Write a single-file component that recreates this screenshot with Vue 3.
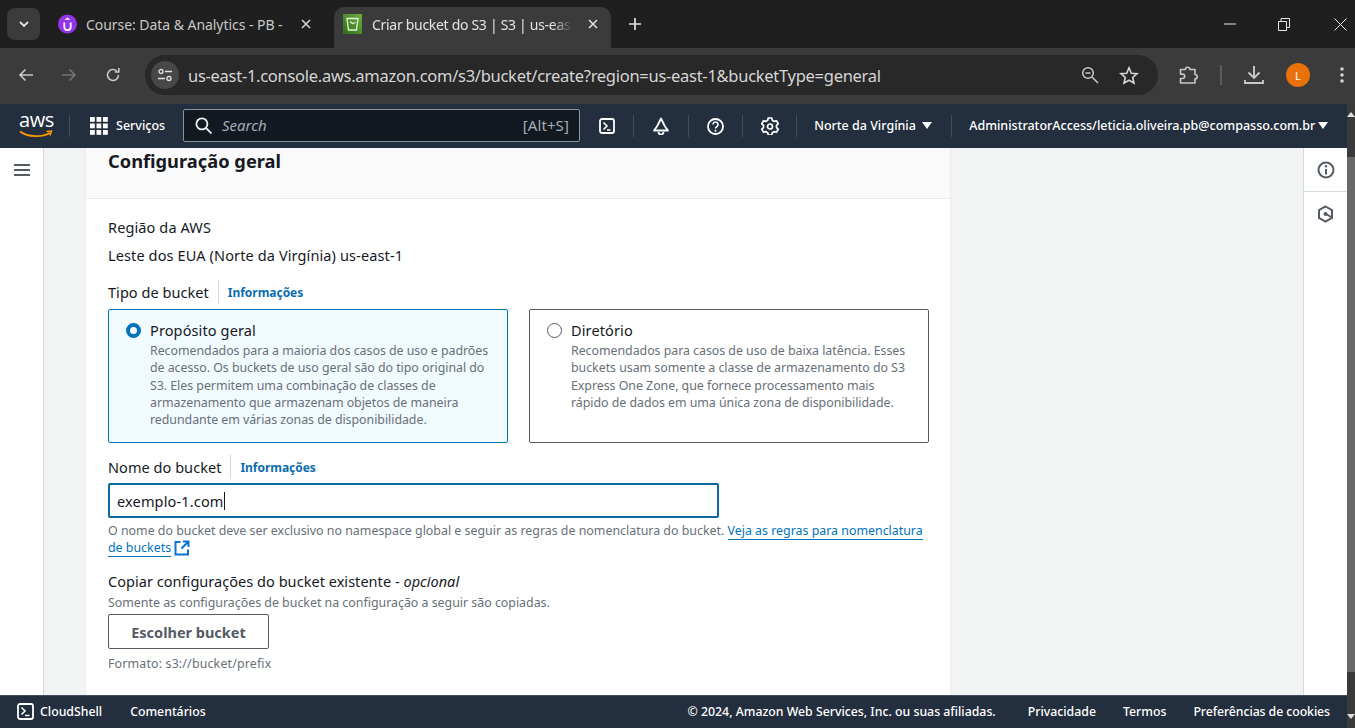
<script setup>
const bars = [0, 1, 2]
</script>

<template>
  <div class="page">
    <div class="tabstrip">
      <div class="tabmenu">
        <svg width="10" height="7" viewBox="0 0 10 7"><path d="M1 1l4 4 4-4" fill="none" stroke="#e3e3e3" stroke-width="1.8"/></svg>
      </div>
      <div class="tab">
        <svg width="19" height="20" viewBox="0 0 19 20" class="favicon"><circle cx="9.500" cy="10" r="9.500" fill="#9333ea"/><path d="M6.300 8.500v4.500a3.200 3.200 0 0 0 6.400 0V8.500" fill="none" stroke="#fff" stroke-width="1.800"/><path d="M9.500 3.500l3 2.300h-6z" fill="#fff"/></svg>
        <span class="tabtitle">Course: Data &amp; Analytics - PB -</span>
        <svg width="10" height="10" viewBox="0 0 10 10" class="tabx"><path d="M1 1l8 8M9 1l-8 8" stroke="#d5d5d5" stroke-width="1.500"/></svg>
      </div>
      <div class="tab active">
        <svg width="19" height="20" viewBox="0 0 19 20" class="favicon"><defs><linearGradient id="s3g" x1="0" y1="1" x2="1" y2="0"><stop offset="0" stop-color="#2f6e1c"/><stop offset="1" stop-color="#6cae3e"/></linearGradient></defs><rect width="19" height="20" fill="url(#s3g)"/><path d="M4 4.500h11l-1.500 11.500h-8z" fill="none" stroke="#e4f3d8" stroke-width="1.300"/><path d="M7 7.500l2.500 2 3-1" fill="none" stroke="#e4f3d8" stroke-width="1.200"/></svg>
        <span class="tabtitle fade">Criar bucket do S3 | S3 | us-east-1</span>
        <svg width="10" height="10" viewBox="0 0 10 10" class="tabx"><path d="M1 1l8 8M9 1l-8 8" stroke="#e3e3e3" stroke-width="1.500"/></svg>
      </div>
      <svg width="14" height="14" viewBox="0 0 14 14" class="newtab"><path d="M7 1v12M1 7h12" stroke="#e3e3e3" stroke-width="1.700"/></svg>
      <div class="winctl">
        <svg width="12" height="2" viewBox="0 0 12 2"><path d="M0 1h12" stroke="#e6e6e6" stroke-width="1"/></svg>
        <svg width="12" height="13" viewBox="0 0 12 13"><path d="M.5 3.500h8v9h-8zM3 3.500v-3h8.500v9h-3" fill="none" stroke="#e6e6e6" stroke-width="1"/></svg>
        <svg width="13" height="13" viewBox="0 0 13 13"><path d="M.5.500l12 12M12.500.500l-12 12" stroke="#e6e6e6" stroke-width="1"/></svg>
      </div>
    </div>

    <div class="toolbar">
      <div class="navbtns">
        <svg width="16" height="14" viewBox="0 0 16 14"><path d="M15 7H2M7.500 1.500L2 7l5.500 5.500" fill="none" stroke="#c7c7c7" stroke-width="1.600"/></svg>
        <svg width="16" height="14" viewBox="0 0 16 14"><path d="M1 7h13M8.500 1.500L14 7l-5.500 5.500" fill="none" stroke="#757575" stroke-width="1.600"/></svg>
        <svg width="16" height="16" viewBox="0 0 16 16"><path d="M13.500 8a5.500 5.500 0 1 1-1.800-4.100M13.800 1v4h-4" fill="none" stroke="#c7c7c7" stroke-width="1.600"/></svg>
      </div>
      <div class="omnibox">
        <div class="sitechip">
          <svg width="16" height="14" viewBox="0 0 16 14"><circle cx="4" cy="3.500" r="2" fill="none" stroke="#e3e3e3" stroke-width="1.300"/><path d="M8 3.500h7M1 10.500h7" stroke="#e3e3e3" stroke-width="1.400"/><circle cx="12" cy="10.500" r="2" fill="none" stroke="#e3e3e3" stroke-width="1.300"/></svg>
        </div>
        <span class="url">us-east-1.console.aws.amazon.com/s3/bucket/create?region=us-east-1&amp;bucketType=general</span>
        <svg width="18" height="18" viewBox="0 0 18 18" class="zoomi"><circle cx="7" cy="7" r="5.300" fill="none" stroke="#c7c7c7" stroke-width="1.500"/><path d="M11 11l6 6M4.500 7h5" stroke="#c7c7c7" stroke-width="1.500"/></svg>
        <svg width="20" height="19" viewBox="0 0 20 19" class="stari"><path d="M10 1.800l2.300 5.400 5.800.5-4.400 3.800 1.300 5.700-5-3-5 3 1.300-5.700-4.400-3.800 5.800-.5z" fill="none" stroke="#d5d5d5" stroke-width="1.600"/></svg>
      </div>
      <div class="toolicons">
        <svg width="20" height="20" viewBox="0 0 20 20"><path d="M1.500 4.500h5a2.200 2.200 0 0 1 4.400 0h5.100v5a2.200 2.200 0 0 1 0 4.400v4.100H1.500v-4.500h2a2.200 2.200 0 0 0 0-4.400h-2z" fill="none" stroke="#c7c7c7" stroke-width="1.600" stroke-linejoin="round"/></svg>
        <span class="tooldiv"></span>
        <svg width="20" height="20" viewBox="0 0 20 20" class="dl"><path d="M10 1v11.500M4.500 7.500l5.500 5.500 5.500-5.500" fill="none" stroke="#c7c7c7" stroke-width="1.900"/><path d="M1 15v3h18v-3" fill="none" stroke="#c7c7c7" stroke-width="1.900"/></svg>
        <span class="avatar">L</span>
        <svg width="4" height="16" viewBox="0 0 4 16" class="dots"><circle cx="2" cy="2" r="1.800" fill="#d5d5d5"/><circle cx="2" cy="8" r="1.800" fill="#d5d5d5"/><circle cx="2" cy="14" r="1.800" fill="#d5d5d5"/></svg>
      </div>
    </div>

    <div class="viewport">
      <div class="console">
        <header class="awsbar">
          <div class="logo">
            <span class="awsword">aws</span>
            <svg width="34" height="9" viewBox="0 0 34 9" class="smile"><path d="M1 1.500c8 6 22 6 30 1.500" fill="none" stroke="#f90" stroke-width="1.800"/><path d="M27.500 1.500l5-.5-1.500 4.500" fill="none" stroke="#f90" stroke-width="1.500"/></svg>
          </div>
          <span class="hdiv first"></span>
          <div class="services">
            <svg width="18" height="18" viewBox="0 0 18 18"><g fill="#fff"><template v-for="r in bars" :key="r"><rect v-for="c in bars" :key="c" :x="c * 6.500" :y="r * 6.500" width="4.800" height="4.800"/></template></g></svg>
            <span>Serviços</span>
          </div>
          <div class="search">
            <svg width="17" height="17" viewBox="0 0 16 16"><circle cx="6.500" cy="6.500" r="5.200" fill="none" stroke="#f2f3f3" stroke-width="1.700"/><path d="M10.500 10.500l5 5" stroke="#f2f3f3" stroke-width="1.700"/></svg>
            <span class="sph">Search</span>
            <span class="skey">[Alt+S]</span>
          </div>
          <div class="hicon">
            <svg width="16" height="16" viewBox="0 0 16 16"><rect x="1" y="1" width="14" height="14" rx="2" fill="none" stroke="#fff" stroke-width="1.800"/><path d="M4.500 4.500L8 8l-3.500 3.500M8 12h3.500" fill="none" stroke="#fff" stroke-width="1.600"/></svg>
          </div>
          <span class="hdiv"></span>
          <div class="hicon">
            <svg width="16" height="18" viewBox="0 0 16 18"><path d="M8 1.500L12 9.500l3 4H1l3-4z" fill="none" stroke="#fff" stroke-width="1.800" stroke-linejoin="round"/><path d="M5.500 15a2.500 2.500 0 0 0 5 0" fill="none" stroke="#fff" stroke-width="1.800"/></svg>
          </div>
          <span class="hdiv"></span>
          <div class="hicon">
            <svg width="17" height="17" viewBox="0 0 17 17"><circle cx="8.500" cy="8.500" r="7.500" fill="none" stroke="#fff" stroke-width="1.800"/><path d="M6 6.500a2.500 2.500 0 1 1 3.800 2.100c-.9.600-1.300 1-1.300 2" fill="none" stroke="#fff" stroke-width="1.600"/><circle cx="8.500" cy="12.800" r="1" fill="#fff"/></svg>
          </div>
          <span class="hdiv"></span>
          <div class="hicon">
            <svg width="18" height="18" viewBox="0 0 18 18"><path d="M7.200 1h3.600l.5 2.300 1.900 1.100 2.200-.7 1.800 3.100-1.700 1.600v2.200l1.700 1.600-1.800 3.100-2.200-.7-1.900 1.100-.5 2.300H7.200l-.5-2.300-1.900-1.100-2.200.7L.8 12.200l1.700-1.600V8.400L.8 6.800l1.800-3.100 2.200.7 1.900-1.100z" fill="none" stroke="#fff" stroke-width="1.700" stroke-linejoin="round"/><circle cx="9" cy="9.500" r="2.500" fill="none" stroke="#fff" stroke-width="1.700"/></svg>
          </div>
          <span class="hdiv"></span>
          <div class="menu region"><span>Norte da Virgínia</span><i class="tri"></i></div>
          <span class="hdiv"></span>
          <div class="menu account"><span>AdministratorAccess/leticia.oliveira.pb@compasso.com.br</span><i class="tri"></i></div>
        </header>

        <div class="workspace">
          <nav class="leftnav">
            <svg width="16" height="14" viewBox="0 0 16 14"><path d="M0 2h16M0 7h16M0 12h16" stroke="#545b64" stroke-width="2"/></svg>
          </nav>
          <main class="content">
            <section class="card">
              <div class="cardhead"><h2>Configuração geral</h2></div>
              <div class="cardbody">
                <div class="label region-label">Região da AWS</div>
                <div class="value">Leste dos EUA (Norte da Virgínia) us-east-1</div>

                <div class="labelrow type-label"><span>Tipo de bucket</span><a>Informações</a></div>
                <div class="tiles">
                  <div class="tile selected">
                    <span class="radio on"></span>
                    <div>
                      <div class="tiletitle">Propósito geral</div>
                      <p>Recomendados para a maioria dos casos de uso e padrões de acesso. Os buckets de uso geral são do tipo original do S3. Eles permitem uma combinação de classes de armazenamento que armazenam objetos de maneira redundante em várias zonas de disponibilidade.</p>
                    </div>
                  </div>
                  <div class="tile">
                    <span class="radio"></span>
                    <div>
                      <div class="tiletitle">Diretório</div>
                      <p>Recomendados para casos de uso de baixa latência. Esses buckets usam somente a classe de armazenamento do S3 Express One Zone, que fornece processamento mais rápido de dados em uma única zona de disponibilidade.</p>
                    </div>
                  </div>
                </div>

                <div class="labelrow name-label"><span>Nome do bucket</span><a>Informações</a></div>
                <div class="input"><span>exemplo-1.com</span><i class="caret"></i></div>
                <p class="hint">O nome do bucket deve ser exclusivo no namespace global e seguir as regras de nomenclatura do bucket. <a class="link">Veja as regras para nomenclatura de buckets</a> <svg width="16" height="16" viewBox="0 0 16 16" class="ext"><path d="M6.500 2H1.500v12.500h12.500V9.500" fill="none" stroke="#0972d3" stroke-width="2"/><path d="M9 1.500h5.500V7M14 2L7.500 8.500" fill="none" stroke="#0972d3" stroke-width="2"/></svg></p>

                <div class="label copy-label">Copiar configurações do bucket existente - <em>opcional</em></div>
                <div class="small">Somente as configurações de bucket na configuração a seguir são copiadas.</div>
                <button class="choose">Escolher bucket</button>
                <div class="small format">Formato: s3://bucket/prefix</div>
              </div>
            </section>
          </main>
          <aside class="rail">
            <div class="railitem">
              <svg width="18" height="18" viewBox="0 0 18 18"><circle cx="9" cy="9" r="7.500" fill="none" stroke="#545b64" stroke-width="2"/><path d="M9 8v5.500" stroke="#545b64" stroke-width="2"/><circle cx="9" cy="5.300" r="1.200" fill="#545b64"/></svg>
            </div>
            <div class="railitem">
              <svg width="17" height="18" viewBox="0 0 17 18"><path d="M8.500 1.500l6.500 3.700v7.600l-6.500 3.700L2 12.800V5.200z" fill="none" stroke="#545b64" stroke-width="2"/><circle cx="8.500" cy="9" r="2" fill="#545b64"/><path d="M9 9l5 3" stroke="#545b64" stroke-width="2"/></svg>
            </div>
          </aside>
        </div>

        <footer class="footer">
          <svg width="17" height="17" viewBox="0 0 17 17"><rect x="1" y="1" width="15" height="15" rx="2" fill="none" stroke="#fff" stroke-width="1.800"/><path d="M4.500 4.500L8 8l-3.500 3.500M8 12.500h4.500" fill="none" stroke="#fff" stroke-width="1.600"/></svg>
          <span class="cs">CloudShell</span>
          <span class="com">Comentários</span>
          <span class="copy">© 2024, Amazon Web Services, Inc. ou suas afiliadas.</span>
          <span class="fl a">Privacidade</span>
          <span class="fl b">Termos</span>
          <span class="fl c">Preferências de cookies</span>
        </footer>
      </div>
      <div class="scrollbar">
        <i class="arrow up"></i>
        <div class="thumb"></div>
        <i class="arrow down"></i>
      </div>
    </div>
  </div>
</template>

<style>
html, body { margin: 0; background: #1f1f1f; overflow: hidden; }
</style>

<style scoped>
* { box-sizing: border-box; }
.page { width: 1355px; height: 728px; display: flex; flex-direction: column; overflow: hidden; font-family: "Noto Sans", "Open Sans", sans-serif; color: #16191f; }

.tabstrip { height: 48px; flex: none; background: #1f1f1f; display: flex; align-items: flex-end; padding-left: 7px; }
.tabmenu { width: 33px; height: 32px; margin-bottom: 8px; border-radius: 8px; background: #3b3b3b; display: flex; align-items: center; justify-content: center; }
.tab { height: 41px; display: flex; align-items: center; padding-bottom: 7px; color: #c7c7c7; font-size: 14px; letter-spacing: -0.05px; }
.tab:nth-child(2) { width: 294px; padding-left: 18px; }
.tab.active { width: 277px; padding-left: 9px; background: #3b3b3b; border-radius: 10px 10px 0 0; color: #e3e3e3; letter-spacing: -0.3px; }
.favicon { flex: none; }
.tabtitle { margin-left: 9px; white-space: nowrap; overflow: hidden; flex: none; }
.tab:nth-child(2) .tabtitle { width: 205px; }
.tab.active .tabtitle { margin-left: 10px; width: 205px; }
.fade { -webkit-mask-image: linear-gradient(90deg, #000 88%, transparent 98%); mask-image: linear-gradient(90deg, #000 88%, transparent 98%); }
.tabx { margin-left: 10px; flex: none; }
.tab.active .tabx { margin-left: 11px; }
.newtab { margin: 0 0 17px 17px; }
.winctl { margin-left: auto; height: 48px; padding: 0 8px 0 0; display: flex; align-items: center; align-self: flex-start; }
.winctl svg:nth-child(2) { margin-left: 42px; }
.winctl svg:nth-child(3) { margin-left: 44px; }

.toolbar { height: 56px; flex: none; background: #3b3b3b; display: flex; align-items: center; padding: 0 0 2px 18px; }
.navbtns { width: 127px; display: flex; align-items: center; gap: 27px; flex: none; }
.navbtns svg:last-child { margin-left: 1px; }
.omnibox { width: 1013px; height: 40px; background: #282828; border-radius: 20px; display: flex; align-items: center; padding-left: 6px; flex: none; }
.sitechip { width: 28px; height: 28px; border-radius: 50%; background: #474747; display: flex; align-items: center; justify-content: center; flex: none; }
.url { margin-left: 9px; color: #d5d5d5; font-size: 16.500px; letter-spacing: -0.28px; white-space: nowrap; width: 692px; flex: none; }
.zoomi { margin-left: 201px; flex: none; }
.stari { margin-left: 20px; flex: none; }
.toolicons { flex: none; display: flex; align-items: center; padding-left: 21px; }
.tooldiv { width: 2px; height: 20px; background: #5c5c5c; margin-left: 21px; }
.dl { margin-left: 22px; }
.avatar { width: 24px; height: 24px; margin-left: 22px; border-radius: 50%; background: #e8710a; color: #fff; display: flex; align-items: center; justify-content: center; font-size: 11px; flex: none; }
.dots { margin-left: 30px; }

.viewport { flex: 1; min-height: 0; display: flex; }
.console { width: 1347px; flex: none; display: flex; flex-direction: column; }

.awsbar { height: 44px; flex: none; background: #232f3e; color: #fff; display: flex; align-items: center; padding-left: 19px; font-size: 12.500px; }
.logo { width: 34px; height: 30px; position: relative; flex: none; }
.awsword { position: absolute; left: 0; top: -3px; font-size: 20px; line-height: 24px; letter-spacing: -0.4px; font-family: "Open Sans", sans-serif; }
.smile { position: absolute; left: 0; top: 19px; }
.hdiv { width: 1px; height: 22px; background: #414d5c; flex: none; }
.hdiv.first { margin-left: 16px; }
.services { display: flex; align-items: center; gap: 8px; margin-left: 20px; width: 93px; flex: none; font-weight: 500; }
.services span, .menu span { margin-top: -2px; }
.search { width: 397px; height: 33px; margin-bottom: 2px; background: #121920; border: 1px solid #879596; border-radius: 2px; display: flex; align-items: center; padding: 0 10px 0 11px; flex: none; }
.sph { margin-left: 10px; font-style: italic; color: #a5adb5; font-size: 15px; }
.skey { margin-left: auto; color: #a5adb5; font-size: 15px; letter-spacing: 0.1px; }
.hicon { width: 53.300px; height: 44px; display: flex; align-items: center; justify-content: center; flex: none; }
.menu { display: flex; align-items: center; gap: 6px; flex: none; font-weight: 500; }
.region { width: 154px; padding-left: 17px; }
.account { padding-left: 17px; gap: 3px; }
.tri { width: 0; height: 0; border-left: 5px solid transparent; border-right: 5px solid transparent; border-top: 7px solid #fff; margin-top: -1px; }

.workspace { flex: 1; min-height: 0; display: flex; background: #f2f3f3; }
.leftnav { width: 44px; flex: none; background: #fff; border-right: 1px solid #d5dbdb; padding: 12px 0 0 14px; }
.content { width: 1259px; flex: none; padding-left: 41px; overflow: hidden; }
.card { width: 866px; height: 640px; background: #fff; border-left: 1px solid #eaeded; border-right: 1px solid #eaeded; }
.cardhead { height: 51px; background: #fafafa; border-bottom: 1px solid #eaeded; padding: 0 0 0 22px; }
.cardhead h2 { margin: 0; font-size: 18.300px; line-height: 26px; font-weight: 700; color: #16191f; }
.cardbody { padding: 0 21px 0 22px; }
.label, .value, .labelrow { font-size: 14.500px; line-height: 20px; color: #16191f; letter-spacing: 0.12px; }
.region-label { margin-top: 18px; }
.value { margin-top: 8px; }
.type-label { margin-top: 17px; }
.labelrow { display: flex; align-items: center; height: 20px; letter-spacing: 0.05px; }
.labelrow span { padding-right: 9px; border-right: 1px solid #d5dbdb; line-height: 24px; }
.labelrow a { margin: 2px 0 0 9px; font-size: 12px; font-weight: 700; color: #0a6db0; letter-spacing: -0.03px; }
.tiles { display: flex; gap: 21px; margin-top: 7px; }
.tile { width: 400px; height: 134px; border: 1px solid #545b64; border-radius: 2px; display: flex; gap: 9px; padding: 9px 14px 0 17px; }
.tile.selected { border-color: #0073bb; background: #f1faff; }
.radio { width: 15px; height: 15px; flex: none; border-radius: 50%; border: 1px solid #545b64; background: #fff; margin-top: 4px; }
.radio.on { border: 4px solid #0073bb; }
.tiletitle { font-size: 14.500px; line-height: 22px; letter-spacing: 0.12px; color: #16191f; }
.tile p { margin: 1px 0 0; font-size: 12.400px; line-height: 17.300px; color: #687078; letter-spacing: -0.04px; }
.name-label { margin-top: 14px; }
.input { width: 611px; height: 35px; margin-top: 6px; border: 2px solid #0a6a9f; border-radius: 2px; display: flex; align-items: center; padding-left: 7px; font-size: 14.500px; color: #16191f; letter-spacing: 0.15px; }
.caret { width: 1px; height: 18px; background: #16191f; }
.hint { margin: 4px 0 0; font-size: 12.400px; line-height: 17px; color: #687078; letter-spacing: 0; }
.link { color: #0073bb; border-bottom: 1px solid #0073bb; }
.ext { vertical-align: -4px; }
.label.copy-label { margin-top: 15px; letter-spacing: 0.04px; }
.small { font-size: 12.400px; line-height: 17px; color: #687078; letter-spacing: -0.01px; margin-top: 3px; }
.choose { display: block; width: 161px; height: 35px; margin-top: 3px; background: #fff; border: 1px solid #545b64; border-radius: 2px; color: #545b64; font: 700 14.500px "Noto Sans", sans-serif; padding: 0; }
.small.format { margin-top: 6px; letter-spacing: 0.16px; }

.rail { width: 44px; flex: none; background: #fff; border-left: 1px solid #d5dbdb; }
.railitem { height: 44px; display: flex; align-items: center; justify-content: center; }
.railitem:first-child { border-bottom: 1px solid #d5dbdb; }

.scrollbar { width: 8px; flex: none; background: #3a3a3a; position: relative; padding-top: 53px; }
.thumb { width: 8px; height: 515px; background: #686868; }
.arrow { position: absolute; left: 0; width: 0; height: 0; border-left: 4px solid transparent; border-right: 4px solid transparent; }
.arrow.up { top: 8px; border-bottom: 5px solid #e0e0e0; }
.arrow.down { bottom: 9px; border-top: 5px solid #e0e0e0; }

.footer { height: 33px; flex: none; background: #232f3e; color: #fff; display: flex; align-items: center; padding: 0 17px 1px; font-size: 12.300px; font-weight: 500; border-top: 1px solid #414d5c; }
.cs { margin-left: 6px; }
.com { margin-left: 28px; }
.copy { margin-left: auto; }
.fl.a { margin-left: 32px; }
.fl.b { margin-left: 27px; }
.fl.c { margin-left: 27px; letter-spacing: -0.08px; }
</style>
